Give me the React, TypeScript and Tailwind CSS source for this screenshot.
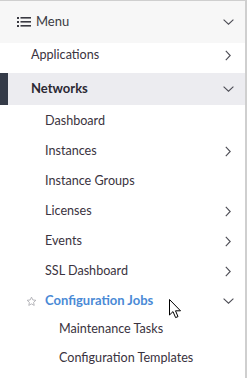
import React from "react";

const ChevronRight = () => (
  <svg width="6" height="11" viewBox="0 0 6 11" className="shrink-0">
    <path d="M0.8 0.8 L5.2 5.5 L0.8 10.2" fill="none" stroke="#4d4d55" strokeWidth="1.1" />
  </svg>
);
const ChevronDown = () => (
  <svg width="11" height="6" viewBox="0 0 11 6" className="shrink-0">
    <path d="M0.6 0.6 L5.5 5.2 L10.4 0.6" fill="none" stroke="#4d4d55" strokeWidth="1.1" />
  </svg>
);

const Row = ({ label, pl, chevron, h = "h-[30px]", extra = "" }: { label: string; pl: string; chevron?: boolean; h?: string; extra?: string }) => (
  <div className={`flex items-center ${h} ${pl} ${extra} pr-[14px] text-[12.6px] text-[#3a3340]`}>
    <span className="flex-1">{label}</span>
    {chevron && <ChevronRight />}
  </div>
);

export default function App() {
  return (
    <div
      className="relative w-[247px] h-[378px] bg-white border-t border-[#cfcfcf] border-r-2 border-r-[#cfcfcf] overflow-hidden"
      style={{ fontFamily: "Lato, 'Open Sans', sans-serif" }}
    >
      <div className="flex items-center h-[42px] bg-[#f7f7f7] pl-[17px] pr-[11px]">
        <svg width="14" height="10" viewBox="0 0 14 10" className="shrink-0">
          <rect x="0" y="0" width="2" height="2" fill="#3a3a42" />
          <rect x="0" y="4" width="2" height="2" fill="#3a3a42" />
          <rect x="0" y="8" width="2" height="2" fill="#3a3a42" />
          <rect x="3.5" y="0" width="10.5" height="1.6" fill="#3a3a42" />
          <rect x="3.5" y="4" width="10.5" height="1.6" fill="#3a3a42" />
          <rect x="3.5" y="8" width="10.5" height="1.6" fill="#3a3a42" />
        </svg>
        <span className="flex-1 ml-[5px] text-[13px] text-[#3a3a42]">Menu</span>
        <ChevronDown />
      </div>
      <Row label="Applications" pl="pl-[31px]" chevron extra="pb-[5px]" />
      <div className="flex h-[32px] bg-[#ececf0]">
        <div className="w-[8px] bg-[#343b48]" />
        <div className="flex flex-1 items-center pl-[23px] pr-[11px]">
          <span className="flex-1 text-[13px] font-bold text-[#2b2833]">Networks</span>
          <ChevronDown />
        </div>
      </div>
      <div className="h-[1px]" />
      <Row label="Dashboard" pl="pl-[45px]" />
      <Row label="Instances" pl="pl-[45px]" chevron />
      <Row label="Instance Groups" pl="pl-[45px]" />
      <Row label="Licenses" pl="pl-[45px]" chevron />
      <Row label="Events" pl="pl-[45px]" chevron />
      <Row label="SSL Dashboard" pl="pl-[45px]" chevron />
      <div className="flex items-center h-[30px] pl-[26px] pr-[11px]">
        <svg width="11" height="11" viewBox="0 0 24 24" className="shrink-0">
          <path
            d="M12 2.5 L14.9 8.6 L21.5 9.4 L16.6 13.9 L17.9 20.5 L12 17.2 L6.1 20.5 L7.4 13.9 L2.5 9.4 L9.1 8.6 Z"
            fill="none"
            stroke="#a8a8ae"
            strokeWidth="1.8"
            strokeLinejoin="round"
          />
        </svg>
        <span className="flex-1 ml-[8px] text-[13px] font-bold text-[#4a8ad6]">Configuration Jobs</span>
        <ChevronDown />
      </div>
      <Row label="Maintenance Tasks" pl="pl-[59px]" h="h-[27px]" />
      <Row label="Configuration Templates" pl="pl-[59px]" />
      <svg width="13" height="21" viewBox="0 0 13 21" className="absolute left-[169px] top-[298px]">
        <path d="M0.5 0.5 L0.5 16 L4 12.6 L6.6 18.6 L9 17.6 L6.5 11.8 L11.5 11.8 Z" fill="white" stroke="black" strokeWidth="1" strokeLinejoin="round" />
      </svg>
    </div>
  );
}
